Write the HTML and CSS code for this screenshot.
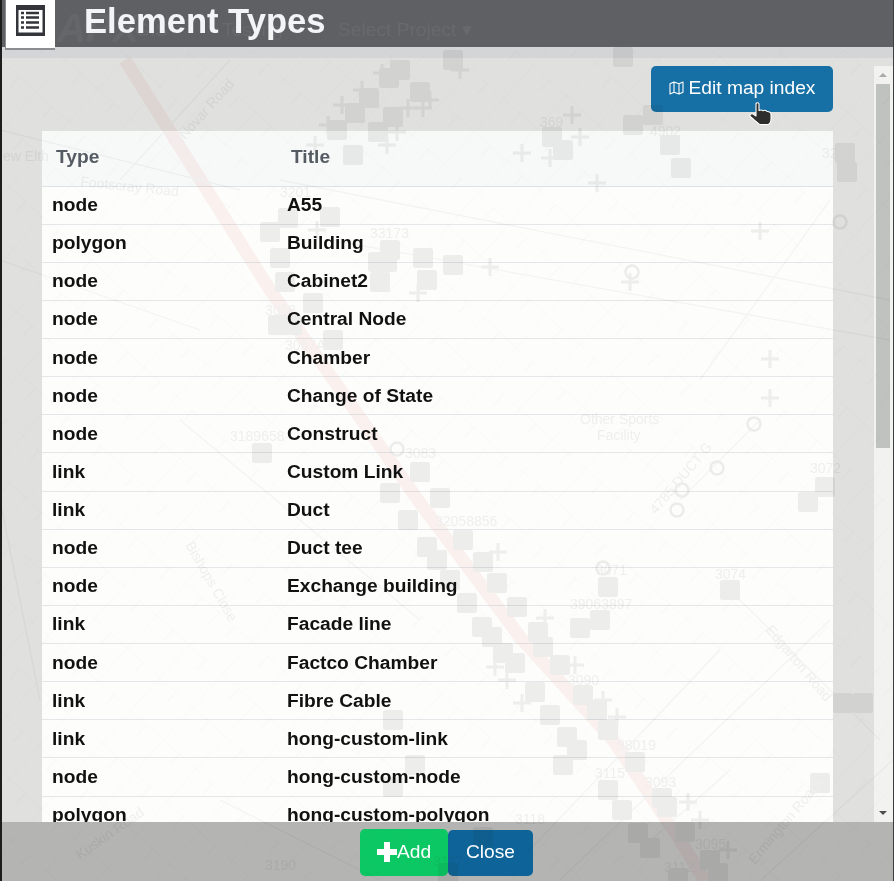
FILE: index.html
```html
<!DOCTYPE html>
<html lang="en">
<head>
<meta charset="utf-8">
<title>Element Types</title>
<link rel="stylesheet" href="styles.css">
</head>
<body>
<div class="dialog">
  <header class="dialog-head">
    <div class="head-ghost" aria-hidden="true">
      <span class="ghost-logo">APX</span><span class="ghost-gis">GIS</span><span class="ghost-testing">Testing</span><span class="ghost-select">Select Project ▾</span>
    </div>
    <div class="head-tile">
      <svg class="head-icon" width="29" height="31" viewBox="0 0 29 31" aria-hidden="true">
        <rect width="29" height="31" fill="#33353a"/>
        <rect x="2.5" y="5" width="24" height="22.5" fill="#fff"/>
        <path d="M5 8h3M5 12.5h3M5 17.5h3M5 22.5h3M10 8h13M10 12.5h13M10 17.5h13M10 22.5h13" stroke="#33353a" stroke-width="2.4" fill="none"/>
      </svg>
    </div>
    <h1 class="head-title">Element Types</h1>
  </header>
  <div class="dialog-band"></div>
  <div class="dialog-main">
    <div class="content">
      <div class="toolbar">
        <button class="btn btn-edit" type="button">
          <svg class="map-icon" width="15" height="14" viewBox="0 0 15 14" aria-hidden="true"><path d="M1 2.8 L5 1 L10 2.8 L14 1 V11.2 L10 13 L5 11.2 L1 13 Z M5 1 V11.2 M10 2.8 V13" fill="none" stroke="#fff" stroke-width="1.1" stroke-linejoin="round"/></svg>
          Edit map index
        </button>
        <svg class="cursor" width="24" height="24" viewBox="0 0 24 24" aria-hidden="true"><path d="M7 2 C7 .3 10 .3 10 2 V8.5 C11.5 7.8 13 7.8 14 8.8 C15.5 8 17 8.3 18 9.5 C19.5 9.2 22 10 22 12.5 V17 C22 20 20.5 22.5 19 22.5 H11 C9 21.5 5 17.5 1.2 14.5 C.2 13 2 11 4 12 L7 14 Z" fill="#2e2e2e" stroke="#fff" stroke-width="1.1" stroke-linejoin="round"/></svg>
      </div>
      <table class="types">
        <thead>
          <tr><th class="col-type">Type</th><th>Title</th></tr>
        </thead>
        <tbody>
          <tr><td>node</td><td>A55</td></tr>
          <tr><td>polygon</td><td>Building</td></tr>
          <tr><td>node</td><td>Cabinet2</td></tr>
          <tr><td>node</td><td>Central Node</td></tr>
          <tr><td>node</td><td>Chamber</td></tr>
          <tr><td>node</td><td>Change of State</td></tr>
          <tr><td>node</td><td>Construct</td></tr>
          <tr><td>link</td><td>Custom Link</td></tr>
          <tr><td>link</td><td>Duct</td></tr>
          <tr><td>node</td><td>Duct tee</td></tr>
          <tr><td>node</td><td>Exchange building</td></tr>
          <tr><td>link</td><td>Facade line</td></tr>
          <tr><td>node</td><td>Factco Chamber</td></tr>
          <tr><td>link</td><td>Fibre Cable</td></tr>
          <tr><td>link</td><td>hong-custom-link</td></tr>
          <tr><td>node</td><td>hong-custom-node</td></tr>
          <tr><td>polygon</td><td>hong-custom-polygon</td></tr>
        </tbody>
      </table>
    </div>
    <div class="scrollbar">
      <span class="arrow arrow-up"></span>
      <div class="track"><div class="thumb"></div></div>
      <span class="arrow arrow-down"></span>
    </div>
  </div>
  <footer class="dialog-foot">
    <button class="btn btn-add" type="button"><span class="plus"></span>Add</button>
    <button class="btn btn-close" type="button">Close</button>
  </footer>
</div>

<svg class="map" width="894" height="881" viewBox="0 0 894 881" aria-hidden="true">
  <defs>
    <pattern id="streets" width="44" height="44" patternUnits="userSpaceOnUse" patternTransform="rotate(42)">
      <path d="M0 0H44M0 0V44M22 0V14" fill="none" stroke="#f9f9f9" stroke-width="1.1"/>
    </pattern>
    <rect id="n" x="-10" y="-10" width="20" height="20" rx="2.5"/>
    <path id="c" d="M0 -9V9M-9 0H9"/>
    <circle id="r" r="6.5"/>
  </defs>
  <rect class="map-grid" x="2" y="50" width="890" height="831" fill="url(#streets)"/>
  <path class="map-road" d="M125 60 L270 290 L423 507 L520 637 L613 740 L680 840 L705 881"/>
  <path class="map-line" d="M0 130 L240 190 M0 260 L200 330 M230 60 L120 180 M280 180 L890 300 M330 240 L890 340 M180 420 L420 620 M560 880 L830 620 M730 590 L880 740 M520 860 L720 650 M680 500 L760 420 M830 200 L700 380 M220 800 L380 880 M0 500 L40 700 M760 881 L893 760 M640 850 L730 770"/>
  <g class="map-node">
    <use href="#n" x="400" y="70"/><use href="#n" x="389" y="78"/><use href="#n" x="369" y="98"/><use href="#n" x="355" y="113"/><use href="#n" x="420" y="92"/><use href="#n" x="393" y="117"/><use href="#n" x="337" y="130"/><use href="#n" x="378" y="132"/><use href="#n" x="353" y="155"/><use href="#n" x="453" y="60"/><use href="#n" x="552" y="137"/><use href="#n" x="563" y="150"/><use href="#n" x="633" y="125"/><use href="#n" x="653" y="115"/><use href="#n" x="623" y="57"/><use href="#n" x="670" y="145"/><use href="#n" x="681" y="168"/><use href="#n" x="330" y="217"/><use href="#n" x="288" y="218"/><use href="#n" x="270" y="232"/><use href="#n" x="280" y="258"/><use href="#n" x="285" y="282"/><use href="#n" x="390" y="250"/><use href="#n" x="387" y="262"/><use href="#n" x="378" y="262"/><use href="#n" x="423" y="258"/><use href="#n" x="427" y="280"/><use href="#n" x="453" y="265"/><use href="#n" x="380" y="282"/><use href="#n" x="313" y="303"/><use href="#n" x="278" y="325"/><use href="#n" x="292" y="325"/><use href="#n" x="333" y="340"/><use href="#n" x="262" y="453"/>
    <use href="#n" x="420" y="472"/><use href="#n" x="390" y="493"/><use href="#n" x="440" y="498"/><use href="#n" x="408" y="520"/><use href="#n" x="427" y="547"/><use href="#n" x="437" y="560"/><use href="#n" x="463" y="540"/><use href="#n" x="483" y="562"/><use href="#n" x="497" y="583"/><use href="#n" x="450" y="580"/><use href="#n" x="467" y="603"/><use href="#n" x="517" y="607"/><use href="#n" x="482" y="627"/><use href="#n" x="492" y="637"/><use href="#n" x="503" y="653"/><use href="#n" x="515" y="663"/><use href="#n" x="538" y="632"/><use href="#n" x="543" y="647"/><use href="#n" x="560" y="665"/><use href="#n" x="580" y="628"/><use href="#n" x="600" y="620"/><use href="#n" x="608" y="587"/><use href="#n" x="730" y="590"/><use href="#n" x="535" y="692"/><use href="#n" x="583" y="695"/><use href="#n" x="597" y="710"/><use href="#n" x="608" y="730"/><use href="#n" x="550" y="715"/><use href="#n" x="567" y="737"/><use href="#n" x="577" y="750"/><use href="#n" x="563" y="765"/><use href="#n" x="635" y="762"/><use href="#n" x="608" y="790"/><use href="#n" x="622" y="810"/><use href="#n" x="662" y="798"/><use href="#n" x="667" y="807"/><use href="#n" x="638" y="833"/><use href="#n" x="650" y="848"/><use href="#n" x="685" y="832"/><use href="#n" x="710" y="860"/><use href="#n" x="718" y="873"/><use href="#n" x="678" y="878"/><use href="#n" x="825" y="487"/><use href="#n" x="808" y="502"/><use href="#n" x="393" y="720"/><use href="#n" x="415" y="765"/><use href="#n" x="393" y="787"/><use href="#n" x="483" y="837"/><use href="#n" x="448" y="873"/><use href="#n" x="820" y="783"/><use href="#n" x="845" y="153"/><use href="#n" x="847" y="172"/><use href="#n" x="843" y="703"/><use href="#n" x="863" y="703"/>
  </g>
  <g class="map-cross">
    <use href="#c" x="382" y="73"/><use href="#c" x="362" y="90"/><use href="#c" x="342" y="105"/><use href="#c" x="328" y="125"/><use href="#c" x="423" y="108"/><use href="#c" x="408" y="108"/><use href="#c" x="430" y="100"/><use href="#c" x="460" y="70"/><use href="#c" x="315" y="145"/><use href="#c" x="387" y="145"/><use href="#c" x="397" y="132"/><use href="#c" x="522" y="153"/><use href="#c" x="550" y="158"/><use href="#c" x="572" y="115"/><use href="#c" x="580" y="137"/><use href="#c" x="597" y="183"/><use href="#c" x="490" y="267"/><use href="#c" x="317" y="230"/><use href="#c" x="418" y="293"/><use href="#c" x="630" y="282"/><use href="#c" x="760" y="231"/><use href="#c" x="770" y="359"/><use href="#c" x="770" y="398"/>
    <use href="#c" x="498" y="552"/><use href="#c" x="545" y="618"/><use href="#c" x="575" y="665"/><use href="#c" x="495" y="667"/><use href="#c" x="507" y="680"/><use href="#c" x="522" y="703"/><use href="#c" x="688" y="802"/><use href="#c" x="700" y="820"/><use href="#c" x="728" y="850"/><use href="#c" x="603" y="700"/><use href="#c" x="617" y="717"/>
  </g>
  <g class="map-ring">
    <use href="#r" x="632" y="272"/><use href="#r" x="754" y="424"/><use href="#r" x="717" y="468"/><use href="#r" x="682" y="490"/><use href="#r" x="677" y="510"/><use href="#r" x="840" y="222"/><use href="#r" x="603" y="568"/><use href="#r" x="730" y="592"/><use href="#r" x="820" y="784"/><use href="#r" x="483" y="838"/><use href="#r" x="397" y="449"/>
  </g>
  <g class="map-text">
    <text x="3" y="161">ew Elth</text>
    <text x="80" y="186" transform="rotate(6 80 186)">Footscray Road</text>
    <text x="280" y="197">3201</text>
    <text x="370" y="238">33173</text>
    <text x="265" y="315">3068</text>
    <text x="285" y="350">3067A</text>
    <text x="540" y="127">369</text>
    <text x="230" y="441">3189658</text>
    <text x="822" y="158">3212</text>
    <text x="810" y="473">3072</text>
    <text x="580" y="424">Other Sports</text>
    <text x="597" y="440">Facility</text>
    <text x="405" y="458">3083</text>
    <text x="435" y="526">32058856</text>
    <text x="596" y="575">3071</text>
    <text x="715" y="579">3074</text>
    <text x="570" y="609">39063897</text>
    <text x="568" y="685">3090</text>
    <text x="617" y="750">98019</text>
    <text x="595" y="778">3115</text>
    <text x="645" y="787">3093</text>
    <text x="695" y="849">3095</text>
    <text x="664" y="872">3112</text>
    <text x="265" y="870">3190</text>
    <text x="515" y="824">3118</text>
    <text x="433" y="866">3117</text>
    <text x="650" y="136">4902</text>
    <text x="185" y="140" transform="rotate(-48 185 140)">Novar Road</text>
    <text x="185" y="545" transform="rotate(60 185 545)">Bishops Close</text>
    <text x="656" y="515" transform="rotate(-50 656 515)">4785 DUCT G</text>
    <text x="765" y="630" transform="rotate(50 765 630)">Edgarton Road</text>
    <text x="755" y="865" transform="rotate(-50 755 865)">Ermington Road</text>
    <text x="80" y="860" transform="rotate(-35 80 860)">Kuskin Road</text>
  </g>
</svg>
</body>
</html>
```
FILE: styles.css
```css
* { box-sizing: border-box; }
html, body { margin: 0; height: 100%; }
body {
  width: 894px;
  height: 881px;
  overflow: hidden;
  position: relative;
  background: #e0e0de;
  font-family: "Liberation Sans", Arial, sans-serif;
}
.map {
  position: absolute;
  left: 0;
  top: 0;
  pointer-events: none;
  mix-blend-mode: multiply;
}
.map-road { fill: none; stroke: #fcf3f2; stroke-width: 13; }
.map-line { fill: none; stroke: #f6f6f6; stroke-width: 1.3; }
.map-text text { font-size: 14px; fill: #f1f1f1; }
.map-node use { fill: #efefef; }
.map-cross use { fill: none; stroke: #f0f0f0; stroke-width: 3; }
.map-ring use { fill: none; stroke: #eeeeee; stroke-width: 2.5; }

.dialog {
  width: 894px;
  height: 881px;
  display: flex;
  flex-direction: column;
  border-left: 2px solid #1d1d1d;
  border-right: 1px solid #3c3d3f;
}
.dialog-head {
  position: relative;
  height: 47px;
  flex: none;
  display: flex;
  align-items: flex-start;
  background: #5f6063;
  padding-left: 3px;
}
.head-ghost {
  position: absolute;
  left: 0;
  top: 0;
  color: #69696c;
  font-size: 19.2px;
  white-space: nowrap;
}
.head-ghost span { position: absolute; top: 18px; line-height: 24px; }
.head-ghost .ghost-logo { left: 55px; top: 8px; font-size: 40px; line-height: 40px; font-weight: 700; font-style: italic; color: #656669; }
.head-ghost .ghost-gis { left: 133px; }
.head-ghost .ghost-testing { left: 220px; }
.head-ghost .ghost-select { left: 336px; }
.head-tile {
  position: relative;
  width: 50px;
  height: 50px;
  flex: none;
  background: #fff;
  border-left: 1px solid #8b8d90;
  border-bottom: 2px solid #8b8d90;
  display: flex;
  justify-content: center;
  padding-top: 5px;
}
.head-icon { display: block; }
.head-title {
  position: relative;
  margin: 1px 0 0 29px;
  font-size: 34.6px;
  line-height: 40px;
  font-weight: 700;
  color: #f3f4f6;
}
.dialog-band {
  height: 11px;
  flex: none;
  background: #d4d5d6;
}
.dialog-main {
  flex: 1;
  min-height: 0;
  display: flex;
  background: #e0e0de;
}
.content {
  flex: 1;
  min-width: 0;
  overflow: hidden;
  padding: 8px 41px 0 40px;
}
.toolbar {
  position: relative;
  display: flex;
  justify-content: flex-end;
  height: 65px;
}
.cursor { position: absolute; right: 60px; top: 36px; }
.btn {
  border: 0;
  color: #fff;
  font-family: inherit;
  font-size: 19.2px;
  border-radius: 5px;
  height: 46px;
  padding: 0 0 2px;
}
.btn-edit {
  width: 182px;
  background: #1670a5;
  display: flex;
  align-items: center;
  justify-content: center;
  gap: 5px;
}
.map-icon { display: block; }
.types {
  width: 791px;
  border-collapse: collapse;
  table-layout: fixed;
  background: #fdfdfc;
  font-size: 19.2px;
  color: #111;
}
.types thead { background: #f7f8f8; }
.types th {
  height: 55px;
  padding: 0 0 2px 14px;
  text-align: left;
  font-weight: 700;
  color: #555b62;
  border-bottom: 1px solid #dee2e6;
}
.types th.col-type { width: 235px; }
.types td {
  height: 38.125px;
  padding: 0 0 0 10px;
  font-weight: 700;
  border-bottom: 1px solid #e4e7ea;
}
.scrollbar {
  position: relative;
  width: 19px;
  flex: none;
  margin-top: 8px;
  display: flex;
  flex-direction: column;
  background: #f2f2f1;
  padding: 0 3px 0 2px;
}
.track { flex: 1; padding-top: 18px; }
.thumb { height: 364px; background: #c0c2c0; }
.arrow { position: absolute; left: 5px; width: 0; height: 0; border-left: 4px solid transparent; border-right: 4px solid transparent; }
.arrow-up { top: 7px; border-bottom: 4px solid #a9aaaa; }
.arrow-down { bottom: 7px; border-top: 4px solid #4f4f4f; }
.dialog-foot {
  position: relative;
  height: 59px;
  flex: none;
  display: flex;
  justify-content: center;
  align-items: flex-start;
  padding: 7px 2px 0 0;
  background: #b4b4b2;
}
.btn-add {
  position: relative;
  width: 88px;
  height: 47px;
  background: #0cc864;
  display: flex;
  align-items: center;
  justify-content: center;
}
.plus {
  width: 20px;
  height: 20px;
  background:
    linear-gradient(#fff, #fff) center / 20px 6px no-repeat,
    linear-gradient(#fff, #fff) center / 6px 20px no-repeat;
}
.btn-close {
  width: 85px;
  background: #0e6498;
  margin-top: 1px;
  height: 46px;
}
```
